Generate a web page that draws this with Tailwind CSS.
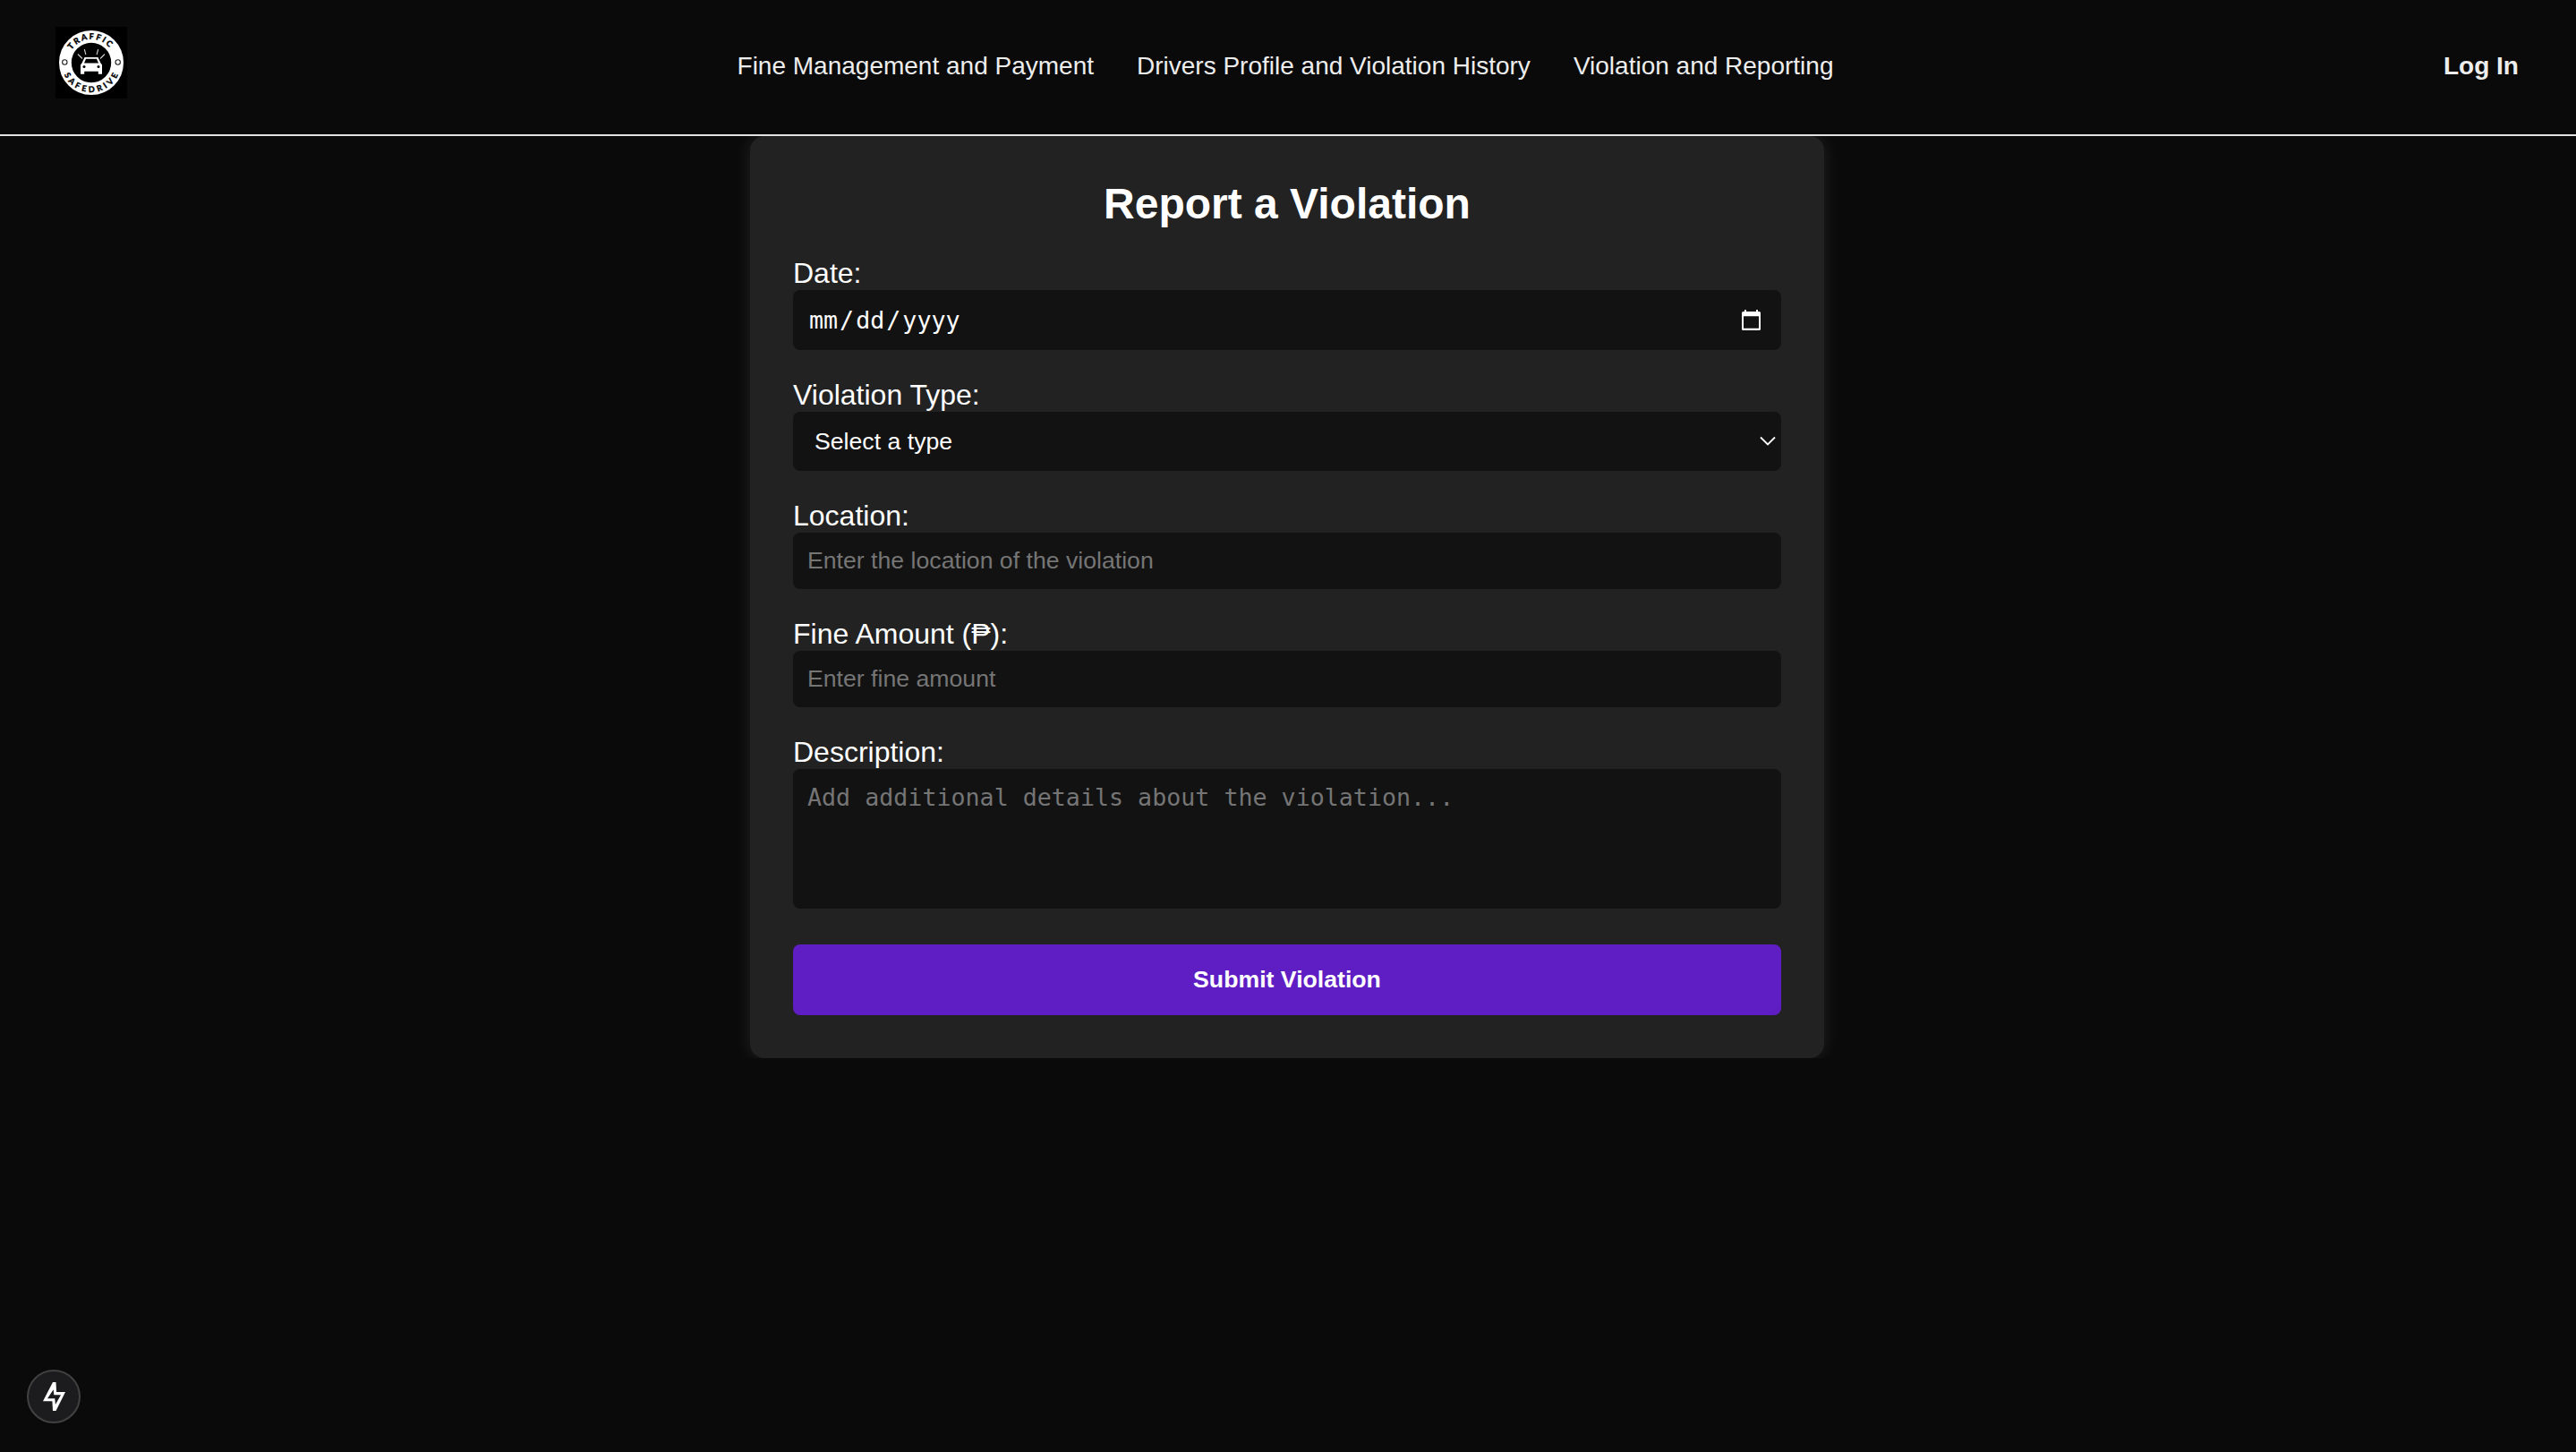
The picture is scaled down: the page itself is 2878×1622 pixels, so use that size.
<!DOCTYPE html>
<html lang="en">
<head>
<meta charset="utf-8">
<title>Report a Violation</title>
<script src="https://cdn.jsdelivr.net/npm/@tailwindcss/browser@4"></script>
</head>
<body class="h-[1622px] overflow-hidden bg-[#0a0a0a] text-white font-['Liberation_Sans',Arial,sans-serif]">
  <header class="relative z-10 flex h-[152px] items-start justify-between border-b-2 border-[#e2e2e2] bg-[#0a0a0a] pl-[62px] pr-16 pt-[30px] text-[28px] leading-8 text-[#ededed]">
    <svg class="size-20 bg-black" viewBox="0 0 80 80" fill="none">
      <circle cx="40" cy="40" r="29.1" stroke="#fff" stroke-width="13.8"/>
      <path id="arcTop" d="M13.8 40a26.2 26.2 0 0 1 52.4 0"/>
      <path id="arcBottom" d="M7 40a33 33 0 0 0 66 0"/>
      <g fill="#000" stroke="#000" stroke-width="0.3" class="font-['Lato',sans-serif] text-[9.2px] font-black" text-anchor="middle">
        <text letter-spacing="1.9"><textPath href="#arcTop" startOffset="49%">TRAFFIC</textPath></text>
        <text letter-spacing="3.300"><textPath href="#arcBottom" startOffset="51.500%">SAFEDRIVE</textPath></text>
      </g>
      <circle cx="10.300" cy="39.500" r="2.700" stroke="#222" stroke-width="1.100"/>
      <circle cx="69.700" cy="39.500" r="2.700" stroke="#222" stroke-width="1.100"/>
      <g stroke="#ccc" stroke-width="1.100">
        <path d="M32.300 25l1.600 6M25 30.500l5 5M47.700 25l-1.600 6M55 30.500l-5 5"/>
      </g>
      <path fill="#fff" d="M32.500 34h15l3 6.500 1.500 2v10.300h-4.200v-3h-15.600v3H28V42.500l1.500-2z"/>
      <path fill="#000" d="M34 35.700h12l2 4.800H32z"/>
      <circle cx="32" cy="44.500" r="1.500" fill="#000"/><circle cx="48" cy="44.500" r="1.500" fill="#000"/>
    </svg>
    <nav class="mt-7 flex gap-12">
      <a>Fine Management and Payment</a>
      <a>Drivers Profile and Violation History</a>
      <a>Violation and Reporting</a>
    </nav>
    <a class="mt-7 font-bold">Log In</a>
  </header>

  <main class="overflow-hidden pr-[2px]">
    <form class="mx-auto flex h-[1030px] w-[1200px] flex-col rounded-2xl bg-[#222] p-12 text-[26.667px] shadow-[0_0_20px_rgba(255,255,255,0.1)]">
      <h1 class="h-[55px] text-center text-5xl font-bold leading-[55px]">Report a Violation</h1>

      <label class="mt-8 h-[37px] text-[32px] leading-[37px]">Date:</label>
      <div class="flex h-[67px] items-center justify-between rounded-lg bg-[#121212] pl-[18px] pr-[22px] font-['DejaVu_Sans_Mono',monospace]">
        <span class="flex gap-[2px]"><span>mm</span><span>/</span><span>dd</span><span>/</span><span>yyyy</span></span>
        <svg class="h-6 w-[23px]" viewBox="0 0 23 24" fill="#fff"><path fill-rule="evenodd" d="M4 0h2v2h11V0h2v2h1.500a1.500 1.500 0 0 1 1.500 1.500v18a1.500 1.500 0 0 1-1.500 1.500h-18A1.500 1.500 0 0 1 1 21.500v-18A1.500 1.500 0 0 1 2.500 2H4zM3 7.200v13.600h17V7.200z"/></svg>
      </div>

      <label class="mt-8 h-[37px] text-[32px] leading-[37px]">Violation Type:</label>
      <div class="flex h-[66px] items-center justify-between rounded-lg bg-[#121212] pl-6 pr-[6px]">
        <span>Select a type</span>
        <svg class="h-3 w-[18px]" viewBox="0 0 18 12" fill="none" stroke="#fff" stroke-width="1.800"><path d="M1 1.500l8 8 8-8"/></svg>
      </div>

      <label class="mt-8 h-[37px] text-[32px] leading-[37px]">Location:</label>
      <input class="h-[63px] rounded-lg bg-[#121212] px-4 placeholder:text-[#757575]" placeholder="Enter the location of the violation">

      <label class="mt-8 h-[37px] text-[32px] leading-[37px]">Fine Amount (₱):</label>
      <input class="h-[63px] rounded-lg bg-[#121212] px-4 placeholder:text-[#757575]" placeholder="Enter fine amount">

      <label class="mt-8 h-[37px] text-[32px] leading-[37px]">Description:</label>
      <textarea class="h-[156px] resize-none rounded-lg bg-[#121212] px-4 py-4 font-['DejaVu_Sans_Mono',monospace] leading-[31px] placeholder:text-[#757575]" placeholder="Add additional details about the violation..."></textarea>

      <button type="button" class="mt-10 h-[79px] rounded-lg bg-[#5f1ec4] pb-[2px] font-bold">Submit Violation</button>
    </form>
  </main>

  <div class="fixed bottom-8 left-[30px] flex size-[60px] items-center justify-center rounded-full border-2 border-[#414141] bg-[#1c1c1e]">
    <svg class="h-8 w-[25px]" viewBox="0 0 25 32" fill="#fff"><path fill-rule="evenodd" d="M11 0h3.500l.6 11H25L14.500 32H11l-.6-10.700H0zM11.700 8.300L5 18.200h8.300l.6 6.700L20 14.200h-7.700z"/></svg>
  </div>
</body>
</html>
